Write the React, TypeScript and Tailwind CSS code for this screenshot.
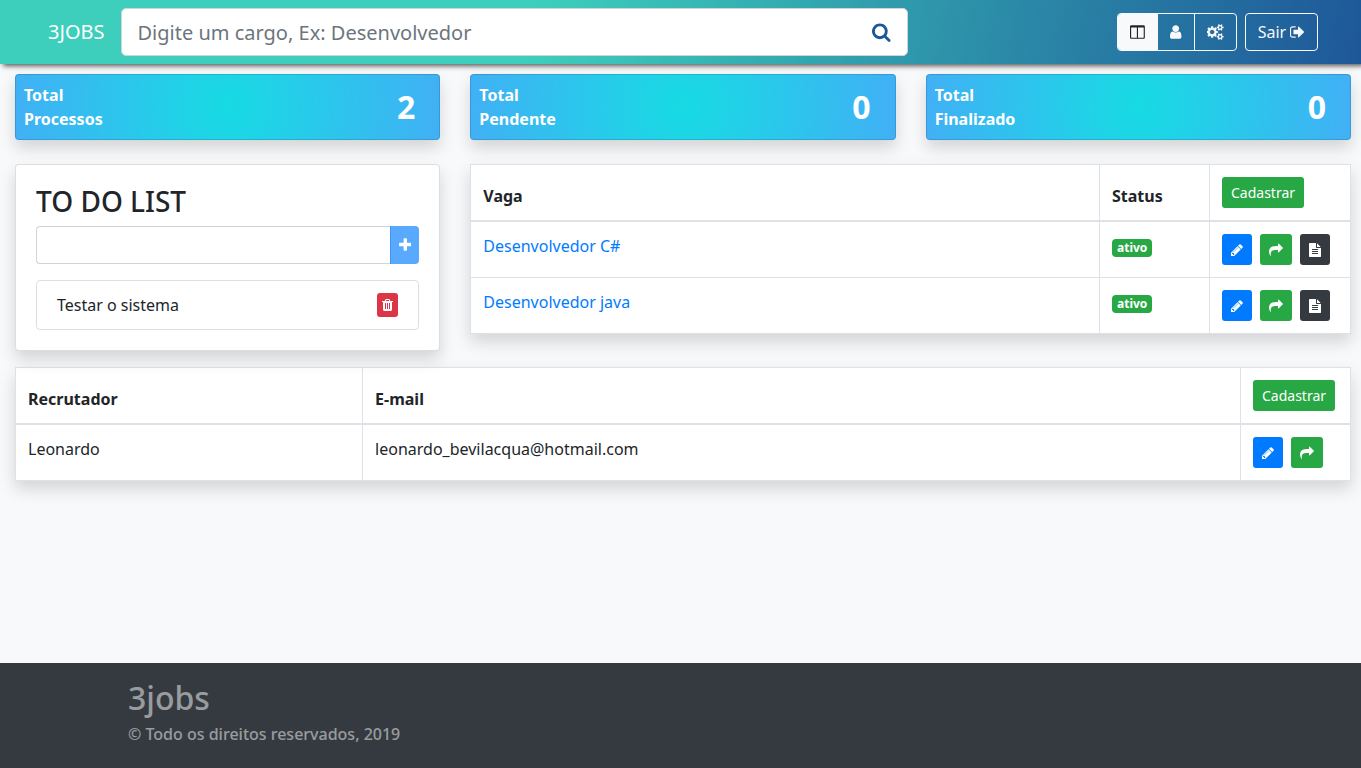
import { useState, type FormEvent, type ReactNode } from "react"
import clsx from "clsx"

// viewBox widths follow each glyph's own advance, so the icons keep their natural spacing
const ICONS = {
    search: {
        viewBox: "64 0 1664 1792",
        path: "M1216 832q0-185-131.5-316.5t-316.5-131.5-316.5 131.5-131.5 316.5 131.5 316.5 316.5 131.5 316.5-131.5 131.5-316.5zm512 832q0 52-38 90t-90 38q-54 0-90-38l-343-342q-179 124-399 124-143 0-273.5-55.5t-225-150-150-225-55.5-273.5 55.5-273.5 150-225 225-150 273.5-55.5 273.5 55.5 225 150 150 225 55.5 273.5q0 220-124 399l343 343q37 37 37 90z",
    },
    columns: {
        viewBox: "64 0 1664 1792",
        path: "M224 1536h608v-1152h-640v1120q0 13 9.5 22.5t22.5 9.5zm1376-32v-1120h-640v1152h608q13 0 22.5-9.5t9.5-22.5zm128-1216v1216q0 66-47 113t-113 47h-1344q-66 0-113-47t-47-113v-1216q0-66 47-113t113-47h1344q66 0 113 47t47 113z",
    },
    user: {
        viewBox: "256 0 1280 1792",
        path: "M1536 1399q0 109-62.5 187t-150.5 78h-854q-88 0-150.5-78t-62.5-187q0-85 8.5-160.5t31.5-152 58.5-131 94-89 134.5-34.5q131 128 313 128t313-128q76 0 134.5 34.5t94 89 58.5 131 31.5 152 8.5 160.5zm-256-887q0 159-112.5 271.5t-271.5 112.5-271.5-112.5-112.5-271.5 112.5-271.5 271.5-112.5 271.5 112.5 112.5 271.5z",
    },
    cogs: {
        viewBox: "0 0 1920 1792",
        path: "M832 896q0-106-75-181t-181-75-181 75-75 181 75 181 181 75 181-75 75-181zm768 512q0-52-38-90t-90-38-90 38-38 90q0 53 37.5 90.5t90.5 37.5 90.5-37.5 37.5-90.5zm0-1024q0-52-38-90t-90-38-90 38-38 90q0 53 37.5 90.5t90.5 37.5 90.5-37.5 37.5-90.5zm-384 421v185q0 10-7 19.5t-16 10.5l-155 24q-11 35-32 76 34 48 90 115 7 11 7 20 0 12-7 19-23 30-82.5 89.5t-78.5 59.5q-11 0-21-7l-115-90q-37 19-77 31-11 108-23 155-7 24-30 24h-186q-11 0-20-7.5t-10-17.5l-23-153q-34-10-75-31l-118 89q-7 7-20 7-11 0-21-8-144-133-144-160 0-9 7-19 10-14 41-53t47-61q-23-44-35-82l-152-24q-10-1-17-9.5t-7-19.5v-185q0-10 7-19.5t16-10.5l155-24q11-35 32-76-34-48-90-115-7-11-7-20 0-12 7-20 22-30 82-89t79-59q11 0 21 7l115 90q34-18 77-32 11-108 23-154 7-24 30-24h186q11 0 20 7.5t10 17.5l23 153q34 10 75 31l118-89q8-7 20-7 11 0 21 8 144 133 144 160 0 8-7 19-12 16-42 54t-45 60q23 48 34 82l152 23q10 2 17 10.5t7 19.5zm640 533v140q0 16-149 31-12 27-30 52 51 113 51 138 0 4-4 7-122 71-124 71-8 0-46-47t-52-68q-20 2-30 2t-30-2q-14 21-52 68t-46 47q-2 0-124-71-4-3-4-7 0-25 51-138-18-25-30-52-149-15-149-31v-140q0-16 149-31 13-29 30-52-51-113-51-138 0-4 4-7 4-2 35-20t59-34 30-16q8 0 46 46.5t52 67.5q20-2 30-2t30 2q51-71 92-112l6-2q4 0 124 70 4 3 4 7 0 25-51 138 17 23 30 52 149 15 149 31zm0-1024v140q0 16-149 31-12 27-30 52 51 113 51 138 0 4-4 7-122 71-124 71-8 0-46-47t-52-68q-20 2-30 2t-30-2q-14 21-52 68t-46 47q-2 0-124-71-4-3-4-7 0-25 51-138-18-25-30-52-149-15-149-31v-140q0-16 149-31 13-29 30-52-51-113-51-138 0-4 4-7 4-2 35-20t59-34 30-16q8 0 46 46.5t52 67.5q20-2 30-2t30 2q51-71 92-112l6-2q4 0 124 70 4 3 4 7 0 25-51 138 17 23 30 52 149 15 149 31z",
    },
    signOut: {
        viewBox: "64 0 1664 1792",
        path: "M704 1440q0 4 1 20t.5 26.5-3 23.5-10 19.5-20.5 6.5h-320q-119 0-203.5-84.5t-84.5-203.5v-704q0-119 84.5-203.5t203.5-84.5h320q13 0 22.5 9.5t9.5 22.5q0 4 1 20t.5 26.5-3 23.5-10 19.5-20.5 6.5h-320q-66 0-113 47t-47 113v704q0 66 47 113t113 47h312l11.5 1 11.5 3 8 5.5 7 9 2 13.5zm928-544q0 26-19 45l-544 544q-19 19-45 19t-45-19-19-45v-288h-448q-26 0-45-19t-19-45v-384q0-26 19-45t45-19h448v-288q0-26 19-45t45-19 45 19l544 544q19 19 19 45z",
    },
    plus: {
        viewBox: "192 0 1408 1792",
        path: "M1600 736v192q0 40-28 68t-68 28h-416v416q0 40-28 68t-68 28h-192q-40 0-68-28t-28-68v-416h-416q-40 0-68-28t-28-68v-192q0-40 28-68t68-28h416v-416q0-40 28-68t68-28h192q40 0 68 28t28 68v416h416q40 0 68 28t28 68z",
    },
    trash: {
        viewBox: "192 0 1408 1792",
        path: "M704 1376v-704q0-14-9-23t-23-9h-64q-14 0-23 9t-9 23v704q0 14 9 23t23 9h64q14 0 23-9t9-23zm256 0v-704q0-14-9-23t-23-9h-64q-14 0-23 9t-9 23v704q0 14 9 23t23 9h64q14 0 23-9t9-23zm256 0v-704q0-14-9-23t-23-9h-64q-14 0-23 9t-9 23v704q0 14 9 23t23 9h64q14 0 23-9t9-23zm-544-992h448l-48-117q-7-9-17-11h-317q-10 2-17 11zm928 32v64q0 14-9 23t-23 9h-96v948q0 83-47 143.5t-113 60.5h-832q-66 0-113-58.5t-47-141.5v-952h-96q-14 0-23-9t-9-23v-64q0-14 9-23t23-9h309l70-167q15-37 54-63t79-26h320q40 0 79 26t54 63l70 167h309q14 0 23 9t9 23z",
    },
    pencil: {
        viewBox: "128 0 1536 1792",
        path: "M491 1536l91-91-235-235-91 91v107h128v128h107zm523-928q0-22-22-22-10 0-17 7l-542 542q-7 7-7 17 0 22 22 22 10 0 17-7l542-542q7-7 7-17zm-54-192l416 416-832 832h-416v-416zm683 96q0 53-37 90l-166 166-416-416 166-165q36-38 90-38 53 0 91 38l235 234q37 39 37 91z",
    },
    share: {
        viewBox: "0 0 1792 1792",
        path: "M1792 640q0 26-19 45l-512 512q-19 19-45 19t-45-19-19-45v-256h-224q-98 0-175.5 6t-154 21.5-133 42.5-105.5 69.5-80 101-48.5 138.5-17.5 181q0 55 5 123 0 6 2.5 23.5t2.5 26.5q0 15-8.5 25t-23.5 10q-16 0-28-17-7-9-13-22t-13.5-30-10.5-24q-127-285-127-451 0-199 53-333 162-403 875-403h224v-256q0-26 19-45t45-19 45 19l512 512q19 19 19 45z",
    },
    file: {
        viewBox: "128 0 1536 1792",
        path: "M1596 476q14 14 28 36h-472v-472q22 14 36 28zm-476 164h544v1056q0 40-28 68t-68 28h-1344q-40 0-68-28t-28-68v-1600q0-40 28-68t68-28h800v544q0 40 28 68t68 28zm160 736v-64q0-14-9-23t-23-9h-704q-14 0-23 9t-9 23v64q0 14 9 23t23 9h704q14 0 23-9t9-23zm0-256v-64q0-14-9-23t-23-9h-704q-14 0-23 9t-9 23v64q0 14 9 23t23 9h704q14 0 23-9t9-23zm0-256v-64q0-14-9-23t-23-9h-704q-14 0-23 9t-9 23v64q0 14 9 23t23 9h704q14 0 23-9t9-23z",
    },
}

type IconName = keyof typeof ICONS

function Icon({ name, className = "h-4" }: { name: IconName; className?: string }) {
    const { viewBox, path } = ICONS[name]

    return (
        <svg aria-hidden="true" viewBox={viewBox} fill="currentColor" className={clsx("w-auto shrink-0", className)}>
            <path d={path} />
        </svg>
    )
}

const STATS = [
    { label: "Processos", value: 2 },
    { label: "Pendente", value: 0 },
    { label: "Finalizado", value: 0 },
]

const JOBS = [
    { title: "Desenvolvedor C#", status: "ativo" },
    { title: "Desenvolvedor java", status: "ativo" },
]

const RECRUITERS = [
    { name: "Leonardo", email: "leonardo_bevilacqua@hotmail.com" },
]

const SHADOW = "shadow-[0_8px_16px_rgba(0,0,0,0.15)]"
const CELL = "border border-[#dee2e6] p-3 align-top"
const HEAD_CELL = "border border-b-2 border-[#dee2e6] p-3 align-bottom font-bold"

function ActionButton({ icon, label, className }: { icon: IconName; label: string; className: string }) {
    return (
        <button type="button" aria-label={label} title={label} className={clsx("flex h-[31px] items-center rounded-[3px] px-[9px] text-white", className)}>
            <Icon name={icon} className="h-3.5" />
        </button>
    )
}

function RegisterButton() {
    return (
        <button type="button" className="block h-[31px] rounded-[3px] bg-[#28a745] px-[9px] text-sm font-normal text-white">
            Cadastrar
        </button>
    )
}

function Header() {
    return (
        <header className="relative flex h-16 items-center bg-[linear-gradient(100deg,#3dcfbb_39%,#1e5799)] pl-12 pr-[43px] shadow-[3px_2px_5px_#555]">
            <a href="#" className="mr-4 text-xl text-white">3JOBS</a>
            <form className="flex h-12 w-[62%] items-center rounded-[5px] border border-[#ced4da] bg-white" onSubmit={(e) => e.preventDefault()}>
                <input
                    type="search"
                    aria-label="Buscar cargo"
                    placeholder="Digite um cargo, Ex: Desenvolvedor"
                    className="h-full min-w-0 flex-1 bg-transparent px-4 text-xl text-[#495057] outline-none placeholder:text-[#6c757d]"
                />
                <button type="submit" aria-label="Buscar" className="px-4 text-[#1e5799]">
                    <Icon name="search" className="h-5" />
                </button>
            </form>
            <nav className="ml-auto flex shrink-0 gap-2 text-[#f8f9fa]">
                <div className="flex h-[38px] divide-x divide-[#f8f9fa] overflow-hidden rounded border border-[#f8f9fa]">
                    <button type="button" aria-label="Painel" className="bg-[#f8f9fa] px-3 text-[#212529]"><Icon name="columns" /></button>
                    <button type="button" aria-label="Perfil" className="px-3"><Icon name="user" /></button>
                    <button type="button" aria-label="Configurações" className="px-3"><Icon name="cogs" /></button>
                </div>
                <button type="button" className="flex h-[38px] items-center gap-1 rounded border border-[#f8f9fa] px-3">
                    Sair <Icon name="signOut" />
                </button>
            </nav>
        </header>
    )
}

function StatCard({ label, value }: { label: string; value: number }) {
    return (
        <div className={clsx("flex items-center justify-between rounded border border-black/13 bg-[radial-gradient(circle,#17dbe3,#41b0f5)] p-2 font-bold text-white", SHADOW)}>
            <p>Total<br />{label}</p>
            <span className="mr-4 text-[32px] leading-10">{value}</span>
        </div>
    )
}

function TodoCard() {
    const [items, setItems] = useState<string[]>(["Testar o sistema"])
    const [text, setText] = useState<string>("")

    function addItem(event: FormEvent) {
        event.preventDefault()
        if (!text.trim()) return;

        setItems([...items, text.trim()])
        setText("")
    }

    return (
        <section className={clsx("rounded border border-black/13 bg-white p-5", SHADOW)}>
            <h3 className="mb-2 text-[28px] leading-[33px] font-medium">TO DO LIST</h3>
            <form className="mb-4 flex h-[38px]" onSubmit={addItem}>
                <input
                    type="text"
                    aria-label="Nova tarefa"
                    value={text}
                    onChange={(e) => setText(e.target.value)}
                    className="min-w-0 flex-1 rounded-l border border-r-0 border-[#ced4da] px-3 outline-none"
                />
                <button type="submit" aria-label="Adicionar" className="rounded-r border-l border-[#3d96f5] bg-[#59a9ff] px-2 text-white">
                    <Icon name="plus" />
                </button>
            </form>
            <ul className="divide-y divide-black/13 rounded border border-black/13">
                {items.map((item, index) => (
                    <li key={index} className="flex items-center justify-between px-5 py-3">
                        {item}
                        <button
                            type="button"
                            aria-label={`Remover ${item}`}
                            onClick={() => setItems(items.filter((_, i) => i !== index))}
                            className="flex h-6 items-center rounded-[3px] bg-[#dc3545] px-[5px] text-white"
                        >
                            <Icon name="trash" className="h-3.5" />
                        </button>
                    </li>
                ))}
            </ul>
        </section>
    )
}

function DataTable({ className, children }: { className?: string; children: ReactNode }) {
    return (
        <table className={clsx("w-full border-collapse bg-white text-left", SHADOW, className)}>
            {children}
        </table>
    )
}

function JobsTable() {
    return (
        <DataTable>
            <thead>
                <tr>
                    <th className={HEAD_CELL}>Vaga</th>
                    <th className={clsx(HEAD_CELL, "w-[110px]")}>Status</th>
                    <th className={clsx(HEAD_CELL, "w-[141px]")}><RegisterButton /></th>
                </tr>
            </thead>
            <tbody>
                {JOBS.map((job) => (
                    <tr key={job.title}>
                        <td className={CELL}><a href="#" className="text-[#007bff]">{job.title}</a></td>
                        <td className={CELL}>
                            <span className="inline-block rounded bg-[#28a745] px-[5px] py-[3px] text-xs leading-3 font-bold text-white">{job.status}</span>
                        </td>
                        <td className={CELL}>
                            <div className="flex gap-2">
                                <ActionButton icon="pencil" label="Editar" className="bg-[#007bff]" />
                                <ActionButton icon="share" label="Encaminhar" className="bg-[#28a745]" />
                                <ActionButton icon="file" label="Detalhes" className="bg-[#343a40]" />
                            </div>
                        </td>
                    </tr>
                ))}
            </tbody>
        </DataTable>
    )
}

function RecruitersTable() {
    return (
        <DataTable className="mt-4">
            <thead>
                <tr>
                    <th className={clsx(HEAD_CELL, "w-[26%]")}>Recrutador</th>
                    <th className={HEAD_CELL}>E-mail</th>
                    <th className={clsx(HEAD_CELL, "w-[110px]")}><RegisterButton /></th>
                </tr>
            </thead>
            <tbody>
                {RECRUITERS.map((recruiter) => (
                    <tr key={recruiter.email}>
                        <td className={CELL}>{recruiter.name}</td>
                        <td className={CELL}>{recruiter.email}</td>
                        <td className={CELL}>
                            <div className="flex gap-2">
                                <ActionButton icon="pencil" label="Editar" className="bg-[#007bff]" />
                                <ActionButton icon="share" label="Encaminhar" className="bg-[#28a745]" />
                            </div>
                        </td>
                    </tr>
                ))}
            </tbody>
        </DataTable>
    )
}

export default function App() {
    return (
        <div className="flex min-h-screen flex-col bg-[#f8f9fb] font-['Noto_Sans',sans-serif] text-base text-[#212529]">
            <Header />
            <main className="pt-2.5 pr-2.5 pb-6 pl-[15px]">
                <div className="grid grid-cols-3 gap-x-[30px] gap-y-6">
                    {STATS.map((stat) => <StatCard key={stat.label} {...stat} />)}
                    <TodoCard />
                    <div className="col-span-2">
                        <JobsTable />
                    </div>
                </div>
                <RecruitersTable />
            </main>
            <footer className="mt-auto bg-[#343a40] px-32 pt-4 pb-6 font-medium text-white/50">
                <h2 className="mb-2 text-[32px] leading-[38px]">3jobs</h2>
                <p className="leading-[19px]">© Todo os direitos reservados, 2019</p>
            </footer>
        </div>
    )
}
